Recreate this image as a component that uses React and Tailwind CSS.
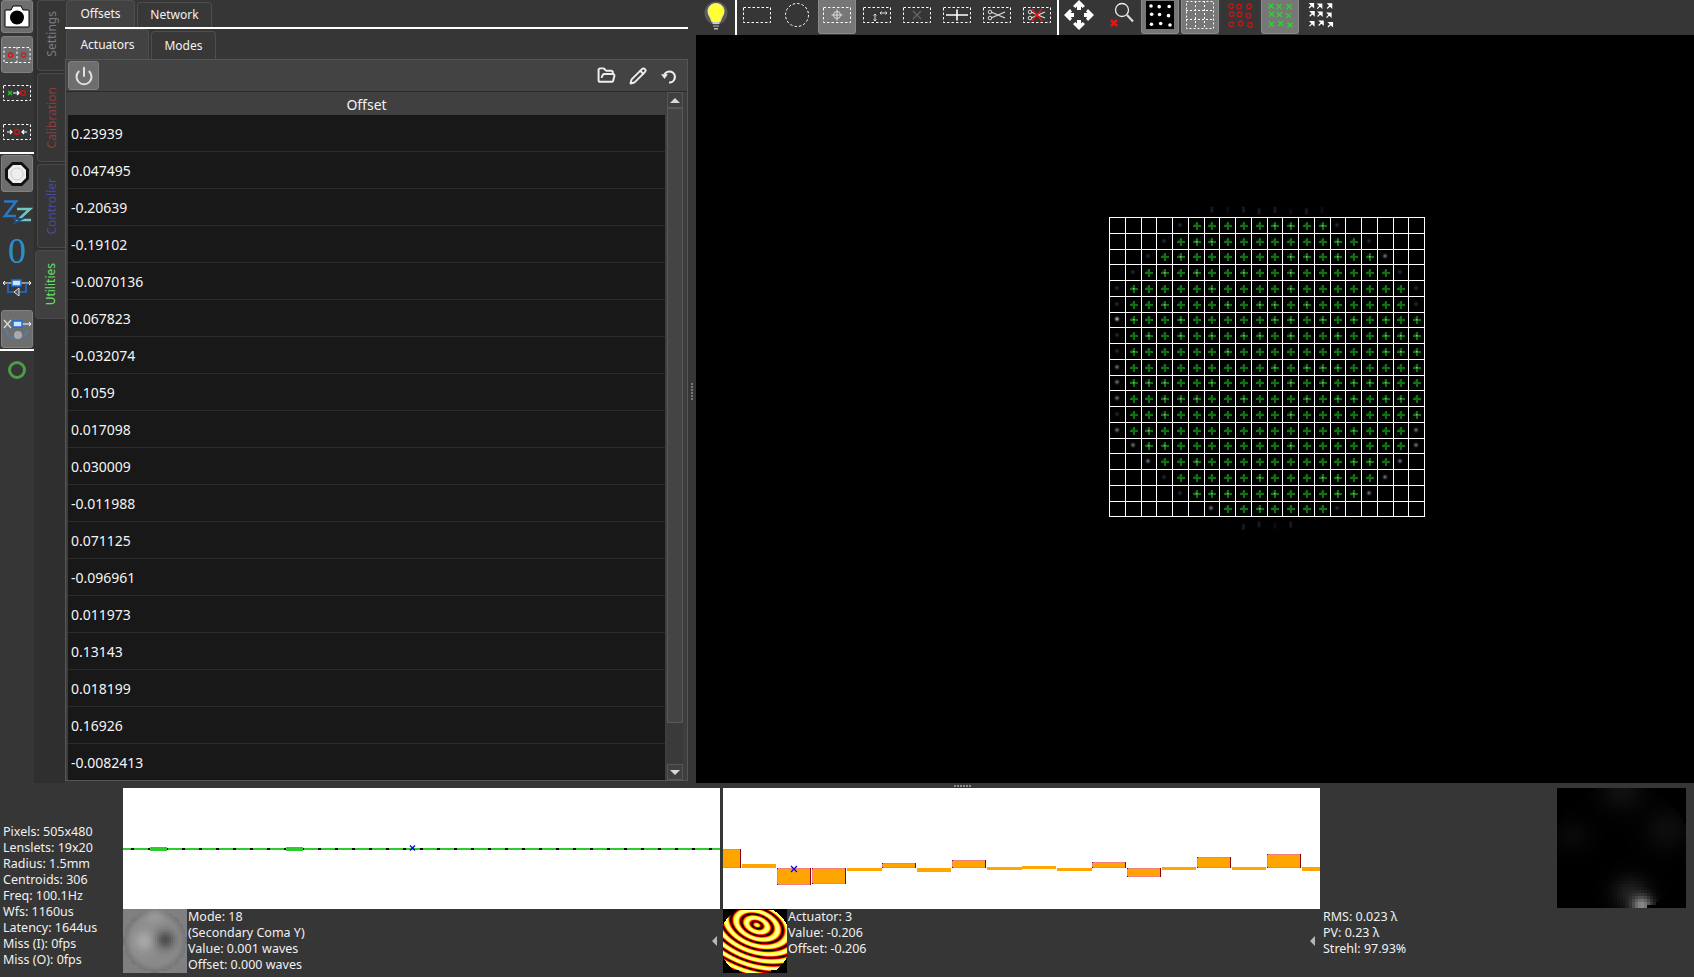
import { FolderOpen, Pencil, Power } from 'lucide-react'

const offsets = ['0.23939', '0.047495', '-0.20639', '-0.19102', '-0.0070136', '0.067823', '-0.032074', '0.1059', '0.017098', '0.030009', '-0.011988', '0.071125', '-0.096961', '0.011973', '0.13143', '0.018199', '0.16926', '-0.0082413']

// [first green col, last green col] per row of the lenslet grid
const spans = [[5, 13], [4, 15], [3, 16], [2, 17], [1, 18], [1, 18], [1, 19], [1, 19], [1, 19], [1, 19], [1, 19], [1, 19], [1, 19], [1, 18], [2, 18], [3, 17], [4, 16], [5, 15], [7, 13]]
const bars = [[723, 741, 849, 868], [742, 776, 864, 868], [777, 811, 868, 885], [812, 846, 868, 884], [847, 882, 868, 871], [882, 916, 863, 868], [917, 951, 868, 872], [952, 986, 860, 868], [987, 1022, 867, 870], [1022, 1056, 866, 869], [1057, 1092, 868, 871], [1092, 1126, 862, 868], [1127, 1161, 868, 877], [1162, 1196, 867, 870], [1197, 1231, 857, 868], [1232, 1266, 867, 870], [1267, 1301, 854, 868], [1302, 1320, 867, 871]]
const infoLeft = ['Pixels: 505x480', 'Lenslets: 19x20', 'Radius: 1.5mm', 'Centroids: 306', 'Freq: 100.1Hz', 'Wfs: 1160us', 'Latency: 1644us', 'Miss (I): 0fps', 'Miss (O): 0fps']

const hash = (a, b) => {
  const v = Math.sin(a * 12.9898 + b * 78.233) * 43758.5453
  return v - Math.floor(v)
}

function DashBox({ children }) {
  return (
    <svg width="30" height="18" viewBox="0 0 30 18" fill="none">
      <rect x="1.5" y="1.5" width="27" height="15" stroke="#fff" strokeDasharray="2.5 2" />
      {children}
    </svg>
  )
}

function Slot({ active, children }) {
  return (
    <div className={`flex h-[34px] shrink-0 items-center justify-center pb-[4px] ${active ? 'mx-px w-[38px] rounded-b-[3px] border-x border-b border-[#8a8a8a] bg-[#777777]' : 'w-10'}`}>
      {children}
    </div>
  )
}

function Bulb() {
  return (
    <svg width="26" height="32" viewBox="0 0 26 32">
      <circle cx="13" cy="12" r="11.5" fill="#fff" opacity="0.18" />
      <path d="M13 2.5c4.6 0 8 3.4 8 7.8 0 4-2.9 6-3.7 10.2H8.7C7.9 16.300 5 14.300 5 10.300 5 5.900 8.400 2.500 13 2.500Z" fill="#ffff33" stroke="#eeeeaa" />
      <rect x="9.500" y="21" width="7" height="2" fill="#ccc" />
      <rect x="10" y="24" width="6" height="2" fill="#777" />
      <rect x="11" y="27" width="4" height="1.500" fill="#bbb" />
    </svg>
  )
}

function MoveArrows() {
  return (
    <svg width="32" height="32" viewBox="0 0 32 32" fill="#fff">
      <path d="M16 1l6 6-2.400 2L18 7.600V11h-4V7.600L12.400 9 10 7z" />
      <path d="M16 31l6-6-2.400-2L18 24.400V21h-4v3.400L12.400 23 10 25z" />
      <path d="M1 16l6-6 2 2.400L7.600 14H11v4H7.600L9 19.600 7 22z" />
      <path d="M31 16l-6-6-2 2.400 1.400 1.600H21v4h3.400L23 19.600l2 2.400z" />
    </svg>
  )
}

function Dots({ kind }) {
  const cells = [0, 1, 2].flatMap((r) => [0, 1, 2].map((c) => [c, r]))
  const jitter = (c, r) => (hash(c + 3, r + 9) - 0.5) * 2
  return (
    <svg width="28" height="28" viewBox="0 0 28 28" fill="none">
      {kind === 'white' && <rect width="28" height="28" fill="#000" />}
      {kind === 'grid' && (
        <g stroke="#fff" strokeDasharray="2 2">
          <rect x="0.500" y="0.500" width="27" height="27" />
          <path d="M9.500 0v28M18.500 0v28M0 9.500h28M0 18.500h28" />
        </g>
      )}
      {cells.map(([c, r]) => {
        const x = 5 + c * 9 + jitter(c, r)
        const y = 5 + r * 9 + jitter(r, c)
        if (kind === 'white') return <circle key={`${c}${r}`} cx={x} cy={y} r="1.800" fill="#fff" />
        if (kind === 'red') return <circle key={`${c}${r}`} cx={x} cy={y} r="2.300" stroke="#cc1414" strokeWidth="1.300" />
        if (kind === 'green') return <path key={`${c}${r}`} d={`M${x - 2.500} ${y - 2.500}l5 5M${x + 2.500} ${y - 2.500}l-5 5`} stroke="#22dd22" strokeWidth="1.300" />
        if (kind === 'arrows') return <path key={`${c}${r}`} d={`M${x - 2} ${y + 2}l3-3M${x - 1} ${y - 2.500}h3.500v3.500z`} stroke="#fff" strokeWidth="1.200" fill="#fff" />
        return null
      })}
    </svg>
  )
}

function ActiveBtn({ height, children }) {
  return (
    <div className="mx-px flex w-[32px] items-center justify-center rounded-[3px] border border-[#808080] bg-[#6e6e6e]" style={{ height }}>
      {children}
    </div>
  )
}

function SideSlot({ height, children }) {
  return <div className="flex w-[34px] items-center justify-center" style={{ height }}>{children}</div>
}

function FlowBox({ left = 'red' }) {
  return (
    <svg width="30" height="18" viewBox="0 0 30 18" fill="none">
      <rect x="1.500" y="1.500" width="27" height="15" stroke="#fff" strokeDasharray="2.500 2" />
      {left === 'red'
        ? <path d="M5 9h5M8 7l2 2-2 2M25 9h-5M22 7l-2 2 2 2" stroke="#fff" strokeWidth="1.200" />
        : <path d="M6 7l4 4M10 7l-4 4" stroke="#22cc22" strokeWidth="1.200" />}
      {left === 'red'
        ? <circle cx="15" cy="9" r="2.300" stroke="#e01010" strokeWidth="1.200" />
        : <>
            <path d="M11 9h6M15 7l2 2-2 2" stroke="#fff" strokeWidth="1.200" />
            <circle cx="21" cy="9" r="2.300" stroke="#e01010" strokeWidth="1.200" />
          </>}
    </svg>
  )
}

function LeftToolbar() {
  return (
    <div className="flex w-[34px] shrink-0 flex-col">
      <ActiveBtn height={33}>
        <svg width="26" height="24" viewBox="0 0 26 24">
          <path d="M2 5h5l2-4h8l2 4h5a1 1 0 0 1 1 1v15a1 1 0 0 1-1 1H2a1 1 0 0 1-1-1V6a1 1 0 0 1 1-1Z" fill="#fff" stroke="#000" />
          <circle cx="13" cy="12.500" r="7" fill="#000" />
        </svg>
      </ActiveBtn>
      <div className="h-[3px]" />
      <ActiveBtn height={37}>
        <svg width="28" height="18" viewBox="0 0 28 18" fill="none">
          <rect x="1" y="1.500" width="26" height="15" stroke="#fff" strokeDasharray="2.500 2" />
          <path d="M14 1v16" stroke="#fff" strokeDasharray="2.500 2" />
          <circle cx="7.500" cy="9" r="2.200" stroke="#e01010" strokeWidth="1.200" />
          <circle cx="20.500" cy="9" r="2.200" stroke="#e01010" strokeWidth="1.200" />
        </svg>
      </ActiveBtn>
      <SideSlot height={39}><FlowBox left="green" /></SideSlot>
      <SideSlot height={40}><FlowBox /></SideSlot>
      <div className="mb-px h-[2px] w-[34px] bg-white" />
      <ActiveBtn height={37}>
        <svg width="26" height="26" viewBox="0 0 26 26">
          <path d="M8 1h10l7 7v10l-7 7H8l-7-7V8z" fill="#111" />
          <path d="M9 4h8l5 5v8l-5 5H9l-5-5V9z" fill="#eeeeee" />
          <circle cx="13" cy="13" r="6" fill="none" stroke="#cccccc" />
        </svg>
      </ActiveBtn>
      <SideSlot height={39}>
        <svg width="32" height="28" viewBox="0 0 32 28" fill="none" strokeWidth="2.500">
          <path d="M3 3.500h12L4 18h11" stroke="#2a78c0" />
          <path d="M16 11h13L17 22h13" stroke="#6ec8c0" />
          <path d="M12 21h9L12 26" stroke="#1c4c88" strokeWidth="2" />
        </svg>
      </SideSlot>
      <SideSlot height={39}>
        <span className="font-['Liberation_Serif',serif] text-[36px] leading-none text-[#2a8fcf]">0</span>
      </SideSlot>
      <SideSlot height={40}>
        <svg width="30" height="24" viewBox="0 0 30 24" fill="none">
          <path d="M1 5h28M27 3l2 2-2 2M3 3L1 5l2 2" stroke="#fff" />
          <path d="M6 5v9h7M24 5v9h-7" stroke="#1a70d8" strokeWidth="1.600" />
          <rect x="10" y="2" width="9" height="6" fill="#cfe4ff" stroke="#1a70d8" strokeWidth="1.500" />
          <path d="M17 10v8l-5-4z" fill="#555" stroke="#ddd" />
        </svg>
      </SideSlot>
      <ActiveBtn height={38}>
        <svg width="30" height="26" viewBox="0 0 30 26" fill="none">
          <path d="M4 14c0 6 6 8 10 8s11-2 11-8" stroke="#5a7ca8" strokeWidth="3" opacity="0.7" />
          <circle cx="16" cy="19" r="4" fill="#aaaaaa" />
          <path d="M14 8h15M27 6l2 2-2 2" stroke="#fff" />
          <path d="M2 4l7 8M9 4l-7 8" stroke="#ddd" strokeWidth="1.300" />
          <rect x="11" y="5" width="9" height="6" fill="#cfe4ff" stroke="#1a70d8" strokeWidth="1.500" />
        </svg>
      </ActiveBtn>
      <div className="mt-px h-[2px] w-[34px] bg-white" />
      <SideSlot height={38}>
        <svg width="18" height="18" viewBox="0 0 18 18" fill="none">
          <circle cx="9" cy="9" r="7.500" stroke="#4c9c4c" strokeWidth="3" />
        </svg>
      </SideSlot>
    </div>
  )
}

function SideTab({ label, height, color, active, lift }) {
  return (
    <div
      className={`flex items-center justify-center rounded-l-[4px] border border-r-0 border-[#4a4a4a] ${active ? 'w-[30px] bg-[#404040]' : 'ml-[2px] w-[28px] bg-[#363636]'} ${lift ? 'pb-[4px]' : ''}`}
      style={{ height }}
    >
      <span className="rotate-180 text-[12px] [writing-mode:vertical-rl]" style={{ color }}>{label}</span>
    </div>
  )
}

function TopTab({ label, width, active, height }) {
  return (
    <div
      className={`flex shrink-0 items-center justify-center rounded-t-[4px] border border-b-0 border-[#4e4e4e] text-[12px] text-[#f2f2f2] ${active ? 'bg-[#424242]' : 'mt-[2px] bg-[#383838]'}`}
      style={{ width, height }}
    >
      {label}
    </div>
  )
}

function Panel() {
  return (
    <div className="mb-[2px] flex w-[623px] shrink-0 flex-col">
      <div className="flex h-[29px] shrink-0 gap-[2px] border-b-2 border-white pl-px">
        <TopTab label="Offsets" width={69} height={27} active />
        <TopTab label="Network" width={75} height={25} />
      </div>
      <div className="flex h-[30px] shrink-0 gap-[2px] pl-px">
        <TopTab label="Actuators" width={83} height={30} active />
        <TopTab label="Modes" width={65} height={28} />
      </div>
      <div className="flex min-h-0 flex-1 flex-col border border-[#565656] bg-[#3e3e3e]">
        <div className="flex h-[32px] shrink-0 items-center border-b border-[#2a2a2a] bg-[#434343] pl-[2px] pr-[9px]">
          <div className="flex h-[29px] w-[31px] items-center justify-center rounded-[3px] border border-[#808080] bg-[#6e6e6e]">
            <Power size={20} strokeWidth={2.400} className="text-[#e0e0e0]" />
          </div>
          <div className="ml-auto flex items-center gap-[13px] text-[#eeeeee]">
            <FolderOpen size={19} strokeWidth={2.500} />
            <Pencil size={18} strokeWidth={2.500} />
            <svg width="18" height="18" viewBox="0 0 18 18" fill="none" stroke="currentColor" strokeWidth="2.200">
              <path d="M4.500 7.500a5.500 5.500 0 1 1 4.500 8" />
              <path d="M1.500 7.500h6l-3 4z" fill="currentColor" strokeWidth="0.500" />
            </svg>
          </div>
        </div>
        <div className="flex min-h-0 flex-1 pl-[2px] pr-[4px]">
          <div className="flex min-w-0 flex-1 flex-col overflow-hidden">
            <div className="flex h-[23px] shrink-0 items-center justify-center bg-[#404040] pt-[2px] text-[14px] text-[#f2f2f2]">Offset</div>
            <div className="min-h-0 flex-1 overflow-hidden bg-[#181818]">
              {offsets.map((v) => (
                <div key={v} className="flex h-[37px] items-center border-b border-[#2b2b2b] pl-[3px] pt-px text-[14px] text-[#f4f4f4]">{v}</div>
              ))}
            </div>
          </div>
          <div className="ml-[2px] flex w-[16px] shrink-0 flex-col bg-[#3a3a3a]">
            <div className="flex h-[16px] shrink-0 items-center justify-center border border-[#565656] bg-[#404040]">
              <div className="h-0 w-0 border-x-[5px] border-b-[5px] border-x-transparent border-b-[#d8d8d8]" />
            </div>
            <div className="h-[615px] shrink-0 border border-[#5a5a5a] bg-[#444444]" />
            <div className="flex-1" />
            <div className="flex h-[16px] shrink-0 items-center justify-center border border-[#565656] bg-[#404040]">
              <div className="h-0 w-0 border-x-[5px] border-t-[5px] border-x-transparent border-t-[#d8d8d8]" />
            </div>
          </div>
        </div>
      </div>
    </div>
  )
}

function ToolBar() {
  return (
    <div className="flex h-[35px] shrink-0 items-start">
      <div className="flex h-[34px] w-[39px] items-center justify-center"><Bulb /></div>
      <div className="h-[35px] w-[2px] shrink-0 bg-white" />
      <Slot><DashBox /></Slot>
      <Slot>
        <svg width="30" height="30" viewBox="0 0 30 30" fill="none">
          <circle cx="15" cy="15" r="11.500" stroke="#fff" strokeDasharray="2.500 2" />
        </svg>
      </Slot>
      <Slot active>
        <DashBox>
          <circle cx="15" cy="9" r="3.500" stroke="#ddd" />
          <path d="M15 3.500v11M9.500 9h11" stroke="#ddd" />
        </DashBox>
      </Slot>
      <Slot>
        <DashBox>
          <path d="M13 8v7M11.500 9.500L13 8l1.500 1.500M11.500 13.500L13 15l1.500-1.500" stroke="#ddd" />
          <path d="M18 7h7M19.500 5.500L18 7l1.500 1.500M23.500 5.500L25 7l-1.500 1.500" stroke="#ddd" />
        </DashBox>
      </Slot>
      <Slot>
        <DashBox>
          <path d="M11 5l8 8M19 5l-8 8" stroke="#666" strokeWidth="1.200" />
        </DashBox>
      </Slot>
      <Slot>
        <DashBox>
          <path d="M4 9h22M15 3.500v11" stroke="#fff" strokeWidth="1.600" />
        </DashBox>
      </Slot>
      <Slot>
        <DashBox>
          <path d="M9 6l14 6M9 12l14-6" stroke="#ddd" strokeWidth="1.300" />
          <circle cx="8" cy="6" r="1.800" stroke="#ddd" />
          <circle cx="8" cy="12" r="1.800" stroke="#ddd" />
        </DashBox>
      </Slot>
      <Slot>
        <DashBox>
          <path d="M9 6l14 6M9 12l14-6" stroke="#ddd" strokeWidth="1.300" />
          <circle cx="8" cy="6" r="1.800" stroke="#ddd" />
          <circle cx="8" cy="12" r="1.800" stroke="#ddd" />
          <path d="M10 3l10 12M20 3L10 15" stroke="#ee1111" strokeWidth="1.400" />
        </DashBox>
      </Slot>
      <div className="h-[35px] w-[2px] shrink-0 bg-white" />
      <Slot><MoveArrows /></Slot>
      <Slot>
        <svg width="34" height="30" viewBox="0 0 34 30" fill="none">
          <circle cx="20" cy="10" r="6.500" stroke="#eeeeee" strokeWidth="1.300" />
          <path d="M25 15l6 6.500" stroke="#dddddd" strokeWidth="2.200" />
          <path d="M9 20l6 6M15 20l-6 6" stroke="#ee1111" strokeWidth="2.600" />
        </svg>
      </Slot>
      <div className="w-px shrink-0" />
      <Slot active><Dots kind="white" /></Slot>
      <Slot active><Dots kind="grid" /></Slot>
      <Slot><Dots kind="red" /></Slot>
      <Slot active><Dots kind="green" /></Slot>
      <Slot><Dots kind="arrows" /></Slot>
    </div>
  )
}

function WaveFront() {
  const ox = 413
  const oy = 182
  const step = 15.75
  const lines = []
  for (let i = 0; i <= 20; i++) lines.push(<path key={`v${i}`} d={`M${Math.round(ox + i * step) + 0.5} ${oy}V${oy + 299.500}`} />)
  for (let j = 0; j <= 19; j++) lines.push(<path key={`h${j}`} d={`M${ox} ${Math.round(oy + j * step) + 0.5}H${ox + 316}`} />)

  const spots = []
  spans.forEach(([a, b], r) => {
    for (let c = 0; c < 20; c++) {
      const cx = Math.round(ox + (c + 0.5) * step)
      const cy = Math.round(oy + (r + 0.5) * step)
      if (c >= a && c <= b) {
        const bright = hash(c, r) > 0.72
        spots.push(
          <g key={`${r}-${c}`}>
            <circle cx={cx} cy={cy} r="4" fill="url(#glow)" />
            <rect x={cx - 3} y={cy} width="8" height="2" fill="#0a750a" />
            <rect x={cx} y={cy - 3} width="2" height="8" fill="#0a750a" />
            {bright && <rect x={cx} y={cy} width="1.500" height="1.500" fill="#b0b0b0" />}
          </g>
        )
      } else if (c === a - 1 || c === b + 1) {
        const lum = r === 6 ? 1 : hash(r, c) > 0.5 ? 0.6 : 0.22
        spots.push(<circle key={`${r}-${c}`} cx={cx} cy={cy} r="4" fill="url(#blob)" opacity={lum} />)
      }
    }
  })

  const ghosts = [[-1, 6], [-1, 7], [-1, 8], [-1, 9], [-1, 10], [-1, 11], [-1, 12], [-1, 13], [19, 8], [19, 9], [19, 10], [19, 11]]
  return (
    <svg width="998" height="748" viewBox="0 0 998 748" className="block">
      <defs>
        <radialGradient id="blob">
          <stop offset="0%" stopColor="#eeeeee" />
          <stop offset="100%" stopColor="#000000" stopOpacity="0" />
        </radialGradient>
        <radialGradient id="glow">
          <stop offset="0%" stopColor="#444444" />
          <stop offset="100%" stopColor="#000000" stopOpacity="0" />
        </radialGradient>
      </defs>
      {ghosts.map(([r, c]) => (
        <rect key={`g${r}${c}`} x={ox + (c + 0.5) * step - 1} y={oy + (r + 0.5) * step - 3 + hash(c, r) * 3} width="3" height="6" fill={hash(r, c) > 0.5 ? '#181818' : '#0c0c0c'} />
      ))}
      {spots}
      <g stroke="#fff" strokeWidth="1.200" shapeRendering="crispEdges">{lines}</g>
    </svg>
  )
}

function Pixels({ cols, rows, cell, color, bg }) {
  const rects = []
  for (let j = 0; j < rows; j++) {
    for (let i = 0; i < cols; i++) {
      const fill = color((i + 0.5) / cols, (j + 0.5) / rows)
      if (fill) rects.push(<rect key={`${i}-${j}`} x={i * cell} y={j * cell} width={cell + 0.2} height={cell + 0.2} fill={fill} />)
    }
  }
  return (
    <svg width={cols * cell} height={rows * cell} className="block shrink-0" style={{ background: bg }} shapeRendering="crispEdges">
      {rects}
    </svg>
  )
}

const gray = (v) => {
  const g = Math.max(0, Math.min(255, Math.round(v)))
  return `rgb(${g},${g},${g})`
}

const modeColor = (x, y) => {
  const r = Math.hypot(x - 0.5, y - 0.5)
  if (r > 0.49) return null
  const g = (a, b, s) => Math.exp(-((x - a) ** 2 + (y - b) ** 2) / s)
  const v = 138 + 30 * g(0.33, 0.5, 0.025) - 60 * g(0.66, 0.48, 0.02) + 18 * g(0.5, 0.06, 0.03) - 22 * Math.max(0, r - 0.38) / 0.11
  return gray(v)
}

const fringeColor = (x, y) => {
  const r = Math.hypot(x - 0.5, y - 0.5)
  if (r > 0.56 || y < 0.02 || (y > 0.95 && Math.abs(x - 0.5) > 0.25)) return null
  const dx = x - 0.53
  const dy = y - 0.25
  // tilted ellipse, matches the rings in the thumbnail
  const u = (dx * 0.94 + dy * 0.34) / 1.6
  const w = -dx * 0.34 + dy * 0.94
  const d = Math.hypot(u, w)
  const t = Math.pow(0.5 + 0.5 * Math.cos((2 * Math.PI * d) / 0.105), 0.7)
  const cr = Math.min(1, t * 2.6)
  const cg = Math.max(0, Math.min(1, t * 2.6 - 0.9))
  const cb = Math.max(0, Math.min(1, t * 2.6 - 1.9))
  return `rgb(${Math.round(cr * 255)},${Math.round(cg * 255)},${Math.round(cb * 255)})`
}

const residualColor = (x, y) => {
  const r = Math.hypot(x - 0.5, y - 0.5)
  if (r > 0.53) return null
  const g = (a, b, s) => Math.exp(-((x - a) ** 2 + (y - b) ** 2) / s)
  return gray(125 * g(0.66, 0.98, 0.006) + 32 * g(0.57, 0.88, 0.02) + 13 * g(0.85, 0.35, 0.03) + 16 * g(0.5, 0.02, 0.03) + 9 * g(0.12, 0.4, 0.02))
}

function ModePlot() {
  const ticks = Array.from({ length: 35 }, (_, i) => i)
  return (
    <svg width="597" height="121" className="block shrink-0 bg-white" shapeRendering="crispEdges">
      <rect x="0" y="60" width="597" height="1.500" fill="#2ecc2e" />
      {ticks.map((i) => <rect key={i} x={8 + i * 17} y="60" width="3" height="1.500" fill="#000" />)}
      <rect x="27" y="59" width="17" height="4" fill="#2ecc2e" />
      <rect x="163" y="59" width="17" height="4" fill="#2ecc2e" />
      <path d="M287 57.500l5 5M292 57.500l-5 5" stroke="#0000dd" strokeWidth="1.200" shapeRendering="auto" />
    </svg>
  )
}

function ActuatorPlot() {
  return (
    <svg width="597" height="121" viewBox="723 788 597 121" className="block shrink-0 bg-white" shapeRendering="crispEdges">
      {bars.map(([x1, x2, y1, y2]) => (
        <g key={x1}>
          <rect x={x1} y={y1} width={x2 - x1} height={y2 - y1} fill="#ffa500" />
          {y2 - y1 > 4 && (
            <>
              <rect x={x1} y={y1} width={x2 - x1} height="1" fill="#f08080" />
              <rect x={x1} y={y2 - 1} width={x2 - x1} height="1" fill="#f08080" />
              <rect x={x1} y={y1} width="1" height={y2 - y1} fill={x1 === 723 ? '#ffa500' : '#f08080'} />
              <rect x={x2 - 1} y={y1} width="1" height={y2 - y1} fill="#8b0000" />
              {x1 !== 723 && <rect x={x1} y={y2 - 1} width="1" height="1" fill="#8b0000" />}
              {x1 !== 723 && <rect x={x1} y={y1} width="1" height="1" fill="#8b0000" />}
            </>
          )}
        </g>
      ))}
      <path d="M791 866l6 6M797 866l-6 6" stroke="#0000dd" strokeWidth="1.200" shapeRendering="auto" />
    </svg>
  )
}

function LeftArrow() {
  return <div className="h-0 w-0 border-y-[5px] border-r-[5px] border-y-transparent border-r-[#b8b8b8]" />
}

function BottomBar() {
  return (
    <div className="flex h-[194px] shrink-0 flex-col">
      <div className="flex h-[5px] shrink-0 items-center justify-center pl-[230px]">
        <div className="flex gap-px">
          {[0, 1, 2, 3, 4, 5].map((i) => <div key={i} className="h-[2px] w-[2px] bg-[#8a8a8a]" />)}
        </div>
      </div>
      <div className="flex min-h-0 flex-1 text-[12.5px] leading-[16px] text-[#f0f0f0]">
        <div className="w-[123px] shrink-0 pl-[3px] pt-[36px]">
          {infoLeft.map((t) => <div key={t}>{t}</div>)}
        </div>
        <div className="flex w-[1197px] shrink-0 flex-col">
          <div className="flex h-[121px] shrink-0">
            <ModePlot />
            <div className="w-[3px] shrink-0 bg-[#363636]" />
            <ActuatorPlot />
          </div>
          <div className="flex min-h-0 flex-1">
            <div className="flex w-[600px] shrink-0 items-start">
              <Pixels cols={32} rows={32} cell={2} color={modeColor} bg="#808080" />
              <div className="pl-px">
                <div>Mode: 18</div>
                <div>(Secondary Coma Y)</div>
                <div>Value: 0.001 waves</div>
                <div>Offset: 0.000 waves</div>
              </div>
              <div className="ml-auto mr-[6px] mt-[27px]"><LeftArrow /></div>
            </div>
            <div className="flex flex-1 items-start">
              <Pixels cols={64} rows={64} cell={1} color={fringeColor} bg="#000" />
              <div className="pl-px">
                <div>Actuator: 3</div>
                <div>Value: -0.206</div>
                <div>Offset: -0.206</div>
              </div>
              <div className="ml-auto mr-[5px] mt-[27px]"><LeftArrow /></div>
            </div>
          </div>
        </div>
        <div className="flex flex-1">
          <div className="flex w-[237px] shrink-0 flex-col justify-start pl-[3px] pt-[121px]">
            <div>RMS: 0.023 λ</div>
            <div>PV: 0.23 λ</div>
            <div>Strehl: 97.93%</div>
          </div>
          <div><Pixels cols={43} rows={40} cell={3} color={residualColor} bg="#000" /></div>
        </div>
      </div>
    </div>
  )
}

export default function App() {
  return (
    <div className="flex h-[977px] w-[1694px] flex-col overflow-hidden bg-[#363636] font-['Noto_Sans',sans-serif]">
      <div className="flex min-h-0 flex-1">
        <LeftToolbar />
        <div className="flex w-[31px] shrink-0 flex-col gap-[2px] bg-[#2f2f2f] pl-px">
          <SideTab label="Settings" height={71} color="#7c7c7c" lift />
          <SideTab label="Calibration" height={89} color="#8c3e3e" />
          <SideTab label="Controller" height={84} color="#4a4aa0" />
          <SideTab label="Utilities" height={69} color="#66e066" active />
        </div>
        <Panel />
        <div className="flex w-[8px] shrink-0 items-center justify-center">
          <div className="flex flex-col gap-px">
            {[0, 1, 2, 3, 4, 5].map((i) => <div key={i} className="h-[2px] w-[2px] bg-[#777777]" />)}
          </div>
        </div>
        <div className="flex w-[998px] shrink-0 flex-col">
          <ToolBar />
          <div className="min-h-0 flex-1 bg-black"><WaveFront /></div>
        </div>
      </div>
      <BottomBar />
    </div>
  )
}
